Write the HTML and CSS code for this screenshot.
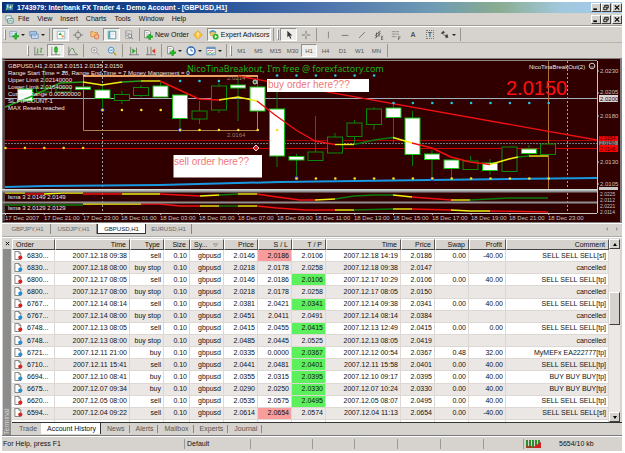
FILE: index.html
```html
<!DOCTYPE html>
<html lang="en">
<head>
<meta charset="utf-8">
<title>Interbank FX Trader 4</title>
<link rel="stylesheet" href="styles.css">
</head>
<body>
<svg class="defs" aria-hidden="true">
  <defs>
    <symbol id="i-app" viewBox="0 0 10 10"><path d="M1 1h8v7H1z" fill="#3f7fb0"/><path d="M1 8l3-4 2 2 3-4" stroke="#9ce06a" fill="none"/><path d="M3 2v3M6 3v3" stroke="#fff"/></symbol>
    <symbol id="i-docs" viewBox="0 0 10 10"><path d="M1 1h6v5H1z" fill="#fff" stroke="#6a9c9c"/><path d="M3 4h6v5H3z" fill="#e8f4f4" stroke="#5a8c8c"/><path d="M4 7l2-1 2 1" stroke="#3c9c3c" fill="none"/></symbol>
    <symbol id="i-new" viewBox="0 0 12 12"><path d="M1 2h8v6H1z" fill="#eef6ff" stroke="#7a9cc0"/><path d="M2 4h3M2 6h2" stroke="#9ab"/><path d="M7 4h2v2.500h2.500v2H9V11H7V8.500H4.500v-2H7z" fill="#22c322" stroke="#0a8a0a" stroke-width=".6"/></symbol>
    <symbol id="i-prof" viewBox="0 0 12 12"><path d="M1 2h8v5H1z" fill="#b4d0ee" stroke="#5c86b8"/><path d="M3 5h8v5H3z" fill="#dcecfc" stroke="#5c86b8"/><path d="M4 7h5" stroke="#5c86b8"/></symbol>
    <symbol id="i-watch" viewBox="0 0 12 12"><path d="M1.500 1.500h9v9h-9z" fill="#fff" stroke="#8ab4c8"/><path d="M3 6l2-3 2 3z" fill="#20a020"/><path d="M6 6.500h4l-2 3z" fill="#e89030"/></symbol>
    <symbol id="i-nav" viewBox="0 0 12 12"><circle cx="6" cy="6" r="3.300" fill="none" stroke="#777"/><path d="M6 0v4M6 8v4M0 6h4M8 6h4" stroke="#777"/></symbol>
    <symbol id="i-folder" viewBox="0 0 12 12"><path d="M1 2h3l1 1h4v5H1z" fill="#f6c47c" stroke="#d88848"/><circle cx="8" cy="8" r="2.800" fill="#f8b490" stroke="#d07040"/></symbol>
    <symbol id="i-term" viewBox="0 0 12 12"><path d="M1.500 1.500h9v9h-9z" fill="#fff" stroke="#3c8c9c"/><path d="M2 2v8h2V2z" fill="#58a0b8"/><path d="M5 3.500h4M5 5.500h4M5 7.500h3" stroke="#cdd"/></symbol>
    <symbol id="i-test" viewBox="0 0 12 12"><path d="M2 1h7v9H2z" fill="#eee" stroke="#999"/><path d="M3.500 2v6M6 3v4" stroke="#888"/><circle cx="7" cy="7" r="2.300" fill="#ddd" stroke="#777"/><path d="M9 9l2 2" stroke="#777"/></symbol>
    <symbol id="i-order" viewBox="0 0 12 12"><path d="M2 .500h5l2 2v7H2z" fill="#fff" stroke="#777"/><path d="M3.500 3h3M3.500 5h3" stroke="#aaa"/><path d="M7 5h2v2h2.500v2H9v2.500H7V9H4.500V7H7z" fill="#22c322" stroke="#0a8a0a" stroke-width=".6"/></symbol>
    <symbol id="i-diamond" viewBox="0 0 12 12"><path d="M6 .800L11.200 6 6 11.200.800 6z" fill="#ffc433" stroke="#e09a20"/><path d="M6 3v4M6 8v1.200" stroke="#fff" stroke-width="1.400"/></symbol>
    <symbol id="i-expert" viewBox="0 0 12 12"><circle cx="4.500" cy="4" r="3.200" fill="#e8c860" stroke="#a88830" stroke-width=".6"/><path d="M0 4q4.500-3 9 0L8 1.500Q4.500-1 1 1.500z" fill="#4aa0c0"/><circle cx="8" cy="8" r="3.500" fill="#2fb52f"/><path d="M7 6l3 2-3 2z" fill="#fff"/></symbol>
    <symbol id="i-cursor" viewBox="0 0 12 12"><path d="M4 1v8l2-2 1.500 3.500 1.300-.600L7.300 6.500H10z" fill="#333"/></symbol>
    <symbol id="i-cross" viewBox="0 0 12 12"><path d="M6 1v4M6 7v4M1 6h4M7 6h4" stroke="#666"/></symbol>
    <symbol id="i-vline" viewBox="0 0 12 12"><path d="M6.500 2v8" stroke="#777"/></symbol>
    <symbol id="i-hline" viewBox="0 0 12 12"><path d="M2 6.500h8" stroke="#666"/></symbol>
    <symbol id="i-slash" viewBox="0 0 12 12"><path d="M2.500 9.500l7-7" stroke="#666"/></symbol>
    <symbol id="i-chan" viewBox="0 0 12 12"><path d="M1 7l7-6M1 10l7-6M3 3v6M6 2v6" stroke="#555" fill="none"/><path d="M9 7.500h2M9 9.500h2M9 11.500h2M9 7v5" stroke="#555" stroke-width=".8"/></symbol>
    <symbol id="i-fibo" viewBox="0 0 12 12"><path d="M1 2h9M1 5h9M1 8h6" stroke="#666" stroke-dasharray="1 .5"/><path d="M9 12V8h2.500M9 10h2" stroke="#555" fill="none" stroke-width=".8"/></symbol>
    <symbol id="i-arrows" viewBox="0 0 12 12"><path d="M1 4l3-3 2 2-3 2zM6 6l3-1 1 4-3 1z" fill="#444"/><path d="M3 4l5 5" stroke="#666"/></symbol>
    <symbol id="i-bars" viewBox="0 0 12 12"><path d="M1 1v10M0 10.500h12" stroke="#777"/><path d="M4.500 3v6M3 8h1.500M8.500 2v6M8.500 3H10M7 7h1.500" stroke="#2e9a2e" fill="none"/></symbol>
    <symbol id="i-candle" viewBox="0 0 12 12"><path d="M1 1v10M0 10.500h11" stroke="#888"/><path d="M6 0v10" stroke="#1b8f1b"/><path d="M4.500 2h3v5h-3z" fill="#35d635" stroke="#1b8f1b"/></symbol>
    <symbol id="i-line" viewBox="0 0 12 12"><path d="M1 1v10M0 10.500h12" stroke="#777"/><path d="M1 8q4-9 6-3t4 4" stroke="#4a8a4a" fill="none"/></symbol>
    <symbol id="i-zin" viewBox="0 0 12 12"><circle cx="5" cy="5" r="3.500" fill="#eee" stroke="#999"/><path d="M7.500 7.500L11 11M3 5h4M5 3v4" stroke="#999"/></symbol>
    <symbol id="i-zout" viewBox="0 0 12 12"><circle cx="5" cy="5" r="3.500" fill="#dcf0fc" stroke="#3a80b8"/><path d="M3 5h4" stroke="#3a80b8"/><path d="M7.500 7.500L11 11" stroke="#c8a030" stroke-width="2"/></symbol>
    <symbol id="i-auto" viewBox="0 0 12 12"><path d="M2 1v10M0 10.500h12M9 2v8" stroke="#777"/><path d="M4 3l4 3-4 3z" fill="#1faf1f"/></symbol>
    <symbol id="i-shift" viewBox="0 0 12 12"><path d="M2 1v10M0 10.500h12M6 1v9" stroke="#777"/><path d="M11 3L7 6l4 3z" fill="#d84020"/></symbol>
    <symbol id="i-clock" viewBox="0 0 12 12"><circle cx="6" cy="6" r="4.800" fill="#fff" stroke="#2868b8" stroke-width="1.800"/><path d="M6 3v3h2.500" stroke="#2868b8" fill="none"/></symbol>
    <symbol id="i-tmpl" viewBox="0 0 12 12"><path d="M1 1.500h10v9H1z" fill="#fff" stroke="#5c8cb8"/><path d="M1 2.500h10" stroke="#5c8cb8" stroke-width="2"/><path d="M2 6l2-1 2 1 3-1" stroke="#c04040" fill="none"/><path d="M2 9l3-1 2 1 3-1" stroke="#3c9c3c" fill="none"/></symbol>
    <symbol id="i-doc" viewBox="0 0 10 10"><path d="M1 .500h4.500l2 2v7H1z" fill="#fff" stroke="#777"/><path d="M5.500.500v2h2" fill="none" stroke="#777"/><circle cx="7" cy="7.200" r="2.300" fill="currentColor"/></symbol>
  </defs>
</svg>

<div class="window">
  <header class="titlebar">
    <svg class="ico-s"><use href="#i-app"/></svg>
    <h1>1743979: Interbank FX Trader 4 - Demo Account - [GBPUSD,H1]</h1>
    <div class="winbtns">
      <button aria-label="Minimize"><svg viewBox="0 0 8 8"><path d="M1 6h4" stroke="#000" stroke-width="2"/></svg></button>
      <button aria-label="Restore"><svg viewBox="0 0 8 8"><path d="M2.500 3V1.500h4v3H5M1.500 3.500h3.500v3H1.500z" fill="none" stroke="#000"/></svg></button>
      <button aria-label="Close" class="close"><svg viewBox="0 0 8 8"><path d="M1.500 1.500l5 5M6.500 1.500l-5 5" stroke="#000" stroke-width="1.300"/></svg></button>
    </div>
  </header>

  <nav class="menubar">
    <svg class="ico-s"><use href="#i-docs"/></svg>
    <button>File</button><button>View</button><button>Insert</button><button>Charts</button><button>Tools</button><button>Window</button><button>Help</button>
    <div class="winbtns">
      <button aria-label="Minimize chart"><svg viewBox="0 0 8 8"><path d="M1 6h4" stroke="#000" stroke-width="2"/></svg></button>
      <button aria-label="Restore chart"><svg viewBox="0 0 8 8"><path d="M2.500 3V1.500h4v3H5M1.500 3.500h3.500v3H1.500z" fill="none" stroke="#000"/></svg></button>
      <button aria-label="Close chart" class="close"><svg viewBox="0 0 8 8"><path d="M1.500 1.500l5 5M6.500 1.500l-5 5" stroke="#000" stroke-width="1.300"/></svg></button>
    </div>
  </nav>

  <div class="toolbar main">
    <i class="grip"></i>
    <button class="drop" aria-label="New chart"><svg><use href="#i-new"/></svg></button>
    <button class="drop" aria-label="Profiles"><svg><use href="#i-prof"/></svg></button>
    <i class="sep"></i>
    <button class="on" aria-label="Market watch"><svg><use href="#i-watch"/></svg></button>
    <button aria-label="Data window"><svg><use href="#i-nav"/></svg></button>
    <button aria-label="Navigator"><svg><use href="#i-folder"/></svg></button>
    <button class="on" aria-label="Terminal"><svg><use href="#i-term"/></svg></button>
    <button aria-label="Strategy tester"><svg><use href="#i-test"/></svg></button>
    <i class="sep"></i>
    <button class="wide"><svg><use href="#i-order"/></svg>New Order</button>
    <button aria-label="MetaEditor"><svg><use href="#i-diamond"/></svg></button>
    <button class="wide on"><svg><use href="#i-expert"/></svg>Expert Advisors</button>
    <i class="sep"></i><i class="grip"></i>
    <button class="on" aria-label="Cursor"><svg><use href="#i-cursor"/></svg></button>
    <button aria-label="Crosshair"><svg><use href="#i-cross"/></svg></button>
    <i class="sep"></i>
    <button aria-label="Vertical line"><svg><use href="#i-vline"/></svg></button>
    <button aria-label="Horizontal line"><svg><use href="#i-hline"/></svg></button>
    <button aria-label="Trendline"><svg><use href="#i-slash"/></svg></button>
    <button aria-label="Channel"><svg><use href="#i-chan"/></svg></button>
    <button aria-label="Fibonacci"><svg><use href="#i-fibo"/></svg></button>
    <button class="glyph">A</button>
    <button class="glyph"><span class="boxed">T</span></button>
    <button class="drop" aria-label="Arrows"><svg><use href="#i-arrows"/></svg></button>
    <i class="sep"></i>
  </div>

  <div class="toolbar charts">
    <i class="grip"></i>
    <button aria-label="Bar chart"><svg><use href="#i-bars"/></svg></button>
    <button class="on" aria-label="Candlesticks"><svg><use href="#i-candle"/></svg></button>
    <button aria-label="Line chart"><svg><use href="#i-line"/></svg></button>
    <i class="sep"></i>
    <button aria-label="Zoom in"><svg><use href="#i-zin"/></svg></button>
    <button aria-label="Zoom out"><svg><use href="#i-zout"/></svg></button>
    <i class="sep"></i>
    <button aria-label="Auto scroll"><svg><use href="#i-auto"/></svg></button>
    <button aria-label="Chart shift"><svg><use href="#i-shift"/></svg></button>
    <i class="sep"></i>
    <button class="drop" aria-label="Indicators"><svg><use href="#i-order"/></svg></button>
    <button class="drop" aria-label="Periods"><svg><use href="#i-clock"/></svg></button>
    <button class="drop" aria-label="Templates"><svg><use href="#i-tmpl"/></svg></button>
    <i class="sep"></i><i class="grip"></i>
    <button class="tf">M1</button><button class="tf">M5</button><button class="tf">M15</button><button class="tf">M30</button><button class="tf on">H1</button><button class="tf">H4</button><button class="tf">D1</button><button class="tf">W1</button><button class="tf">MN</button>
    <i class="sep"></i>
  </div>

  <svg class="chart" id="chart" viewBox="2 58 620 165" role="img" aria-label="GBPUSD H1 chart">
    <rect x="2" y="58" width="620" height="165" fill="#808080"/>
    <rect x="3" y="59" width="617" height="163" fill="#300000"/>
    <path d="M2 60.500H597M4 59V221" stroke="#8a8a8a"/>
    <path d="M5 98.500H597" stroke="#a4b0c0"/>
    <path d="M5 140.500H597" stroke="#b00000"/>
    <path d="M5 143.500H597" stroke="#707880" stroke-dasharray="2 1"/>
    <path d="M5 148.500H597" stroke="#d80000"/>
    <path d="M102.500 61V213M567.500 61V213" stroke="#9aa8a8" stroke-dasharray="2 2"/>
    <path d="M83.500 76V130.500H257.500V76" fill="none" stroke="#b08050"/>
    <path d="M83 76H258" stroke="#e8a060" stroke-width="2"/>
    <path d="M548.500 61V190" stroke="#b07038"/>
    <g id="candles"></g>
    <g id="lines" fill="none"></g>
    <g id="dots"></g>
    <path d="M2 190H597" stroke="#d0dcdc" stroke-width="2"/>
    <path d="M2 191.500H597M2 202.500H597" stroke="#909090" stroke-width="2"/>
    <path d="M2 213.500H597M597.500 61V213" stroke="#c8c8c8"/>
    <circle cx="255" cy="82" r="2" fill="#2a6a2a" stroke="#ddd"/>
    <path d="M256 145l3 3-3 3-3-3z" fill="#e02020" stroke="#fff" stroke-width=".8"/>
    <rect x="267" y="79" width="102" height="13" fill="#fff"/>
    <rect x="173.500" y="155" width="88.500" height="22.500" fill="#fff"/>
    <g class="note"><text x="268" y="88">buy order here???</text><text x="174" y="165">sell order here??</text></g>
    <text class="headline" x="187" y="72">NicoTinaBreakout, I'm free @ forexfactory.com</text>
    <text class="big" x="506" y="95">2.0150</text>
    <g class="range"><text x="227" y="80">2.0214</text><text x="227" y="137">2.0164</text></g>
    <g class="info">
      <text x="8" y="68">GBPUSD,H1  2.0138 2.0151 2.0135 2.0150</text>
      <text x="8" y="75">Range Start Time = 28,  Range End Time = 7  Money Mangement = 0</text>
      <text x="8" y="82">Upper Limit 2.02140000</text>
      <text x="8" y="89">Lower Limit 2.01640000</text>
      <text x="8" y="96">Current Range 0.00500000</text>
      <text x="8" y="103">SL PIPCOUNT-1</text>
      <text x="8" y="110">MAX Resets reached</text>
      <text x="529" y="69">NicoTinaBreakOut(2)</text>
      <text x="8" y="199">lsma 3 2.0149 2.0149</text>
      <text x="8" y="210">lsma 3 2.0129 2.0129</text>
    </g>
    <circle cx="592" cy="66" r="2.800" fill="none" stroke="#ccc"/><path d="M590.500 66.500q1.500 1.500 3 0" stroke="#ccc" fill="none" stroke-width=".7"/>
    <g class="axis" id="times"></g>
    <rect x="599" y="95" width="19" height="7" fill="#d8d8d8"/>
    <rect x="599" y="141" width="19" height="5" fill="#808080"/>
    <rect x="599" y="136" width="19" height="5" fill="#f00"/>
    <rect x="599" y="145" width="19" height="7" fill="#f00"/>
    <rect x="599" y="187" width="19" height="3" fill="#c8c8c8"/>
    <g class="axis">
      <text x="600" y="73">2.0230</text><text x="600" y="94">2.0205</text><text x="600" y="118">2.0180</text>
      <text x="600" y="164">2.0130</text><text x="600" y="186">2.0105</text>
    </g>
    <g class="axis small">
      <text x="600" y="196">2.0225</text><text x="600" y="202">2.0112</text>
      <text x="600" y="208">2.0221</text><text x="600" y="214">2.0114</text>
    </g>
    <g class="axis dark"><text x="600" y="101">2.0200</text></g>
    <g class="axis small dark"><text x="600" y="140">2.0154</text><text x="600" y="145">2.0150</text><text x="600" y="151">2.0146</text></g>
    <path d="M597 71h2M597 93h2M597 116h2M597 162h2M597 184h2" stroke="#c8c8c8"/>
  </svg>

  <div class="charttabs">
    <button>GBPJPY,H1</button><button>USDJPY,H1</button><button class="on">GBPUSD,H1</button><button>EURUSD,H1</button>
    <span class="arrows"><i class="left"></i><i class="right"></i></span>
  </div>

  <section class="terminal">
    <div class="side"><button aria-label="Close terminal"><svg viewBox="0 0 6 6"><path d="M1 1l4 4M5 1L1 5" stroke="#111" stroke-width="1.200"/></svg></button><div class="strip"><span>Terminal</span></div></div>
    <div class="pane">
      <div class="grid">
        <table>
          <colgroup><col class="w43"><col class="w75"><col class="w34"><col class="w26"><col class="w34"><col class="w34"><col class="w34"><col class="w34"><col class="w75"><col class="w34"><col class="w34"><col class="w37"><col></colgroup>
          <thead><tr><th class="l">Order</th><th>Time</th><th>Type</th><th>Size</th><th class="l">Sy... <svg class="funnel" viewBox="0 0 5 4"><path d="M0 .500h5L2.500 4z" fill="#bbb" stroke="#888" stroke-width=".5"/></svg></th><th>Price</th><th>S / L</th><th>T / P</th><th>Time</th><th>Price</th><th>Swap</th><th>Profit</th><th>Comment</th></tr></thead>
          <tbody id="rows"></tbody>
        </table>
        <div class="scroll"><button aria-label="Scroll up"><i class="up"></i></button><div class="track"><div class="thumb"></div></div><button aria-label="Scroll down"><i class="down"></i></button></div>
      </div>
      <div class="termtabs"><button>Trade</button><button class="on">Account History</button><button>News</button><button>Alerts</button><button>Mailbox</button><button>Experts</button><button>Journal</button></div>
    </div>
  </section>

  <footer class="status">
    <span class="help">For Help, press F1</span><span class="prof">Default</span><span class="c62"></span><span></span><span></span><span></span><span></span><span></span>
    <span class="net"><svg viewBox="0 0 15 8"><path d="M0 4h15" stroke="#2e8b2e" stroke-width="8" stroke-dasharray="2 1"/><path d="M6 8h9V2z" fill="#d02020"/><path d="M0 6h6v2H0z" fill="#a04020"/></svg>5654/10 kb</span>
  </footer>
</div>
<script src="script.js"></script>
</body>
</html>
```
FILE: styles.css
```css
:root { --face: #d6d3ce; --dark: #808080; --alt: #ebe7e5; }
* { box-sizing: border-box; }
body { margin: 0; padding: 2px 3px 2px 2px; height: 100vh; background: #fff; font: 7px/10px "Liberation Sans", Arial, sans-serif; color: #111; }
button { font: inherit; color: inherit; background: none; border: 0; padding: 0; margin: 0; display: flex; align-items: center; justify-content: center; }
.defs { position: absolute; width: 0; height: 0; }
.window { display: flex; flex-direction: column; height: 100%; background: var(--face); overflow: hidden; }

.titlebar { display: flex; align-items: center; height: 11px; padding-left: 3px; gap: 3px; flex: none; color: #fff;
  background: linear-gradient(90deg, #0a3078 0%, #1c4a94 30%, #4a70ac 50%, #6f9cb4 70%, #8aac90 80%, #a0c8dc 90%, #a6caf0 100%); }
.titlebar h1 { margin: 0; font-size: 7px; line-height: 11px; white-space: nowrap; }
.ico-s { width: 9px; height: 9px; flex: none; }
.winbtns { display: flex; margin-left: auto; }
.winbtns button { width: 10px; height: 9px; background: var(--face); border: 1px solid; border-color: #fff #404040 #404040 #fff; }
.winbtns .close { margin-left: 1px; }
.winbtns svg { width: 8px; height: 7px; }

.menubar { display: flex; align-items: center; height: 13px; flex: none; padding-left: 3px; border-bottom: 1px solid #a09c94; }
.menubar > button { padding: 0 4px; }

.toolbar { display: flex; align-items: center; flex: none; overflow: hidden; }
.toolbar.main { height: 17px; padding-left: 1px; border-top: 1px solid #fff; border-bottom: 1px solid #b8b4ac; }
.toolbar.charts { height: 15px; padding-left: 24px; }
.toolbar button { width: 17px; height: 13px; flex: none; }
.toolbar svg { width: 10px; height: 10px; flex: none; }
.toolbar .on { background: #efedea; border: 1px solid; border-color: #909090 #fff #fff #909090; }
.toolbar .drop { width: 20px; gap: 2px; }
.toolbar .drop::after { content: ""; border: 2px solid transparent; border-top-color: #222; border-bottom: 0; }
.toolbar .wide { width: auto; gap: 2px; padding: 0 1px; }
.toolbar .glyph { font-weight: bold; color: #555; }
.toolbar .tf { font-size: 6px; color: #555; }
.toolbar .tf.on { width: 16px; }
.boxed { border: 1px dotted #777; line-height: 7px; padding: 0 1px; }
.sep { width: 1px; height: 13px; background: #989490; margin: 0 2px; flex: none; }
.grip { width: 2px; height: 11px; margin: 0 1px; flex: none; border: 1px solid; border-color: #fff #888 #888 #fff; }

.chart { display: block; width: 100%; height: auto; flex: none; font-family: "Liberation Sans", Arial, sans-serif; }
.note { font-size: 10px; fill: #f07878; }
.headline { font-family: "Noto Sans", sans-serif; font-size: 9px; fill: #18b018; }
.big { font-size: 20px; fill: #ff1010; }
.range { font-size: 6px; fill: #a87868; }
.info { font-size: 6px; fill: #e8e8e8; white-space: pre; }
.axis { font-size: 6px; fill: #c4c0c0; }
.axis.small { font-size: 5px; }
.axis.dark { fill: #300; }

.charttabs { display: flex; align-items: stretch; height: 14px; flex: none; font-size: 6px; color: #666; border-top: 1px solid #fff; border-bottom: 1px solid #aaa; padding: 0 0 2px 3px; }
.charttabs button { width: 46px; border-right: 1px solid #888; }
.charttabs .on { width: 49px; background: #fff; color: #111; border: 1px solid #333; border-top: 0; }
.arrows { margin-left: auto; display: flex; gap: 8px; align-items: center; padding-right: 4px; }
.arrows i { border: 2px solid transparent; }
.arrows .left { border-right-color: #999; border-left: 0; }
.arrows .right { border-left-color: #999; border-right: 0; }

.terminal { display: flex; flex: 1; min-height: 0; border-top: 1px solid #fff; }
.side { width: 10px; display: flex; flex-direction: column; flex: none; }
.side button { height: 11px; }
.side svg { width: 5px; height: 5px; }
.strip { flex: 1; background: #8c8c8c; margin: 0 1px; display: flex; align-items: flex-start; writing-mode: vertical-rl; transform: rotate(180deg); color: #d8d8d8; line-height: 8px; }
.pane { flex: 1; min-width: 0; display: flex; flex-direction: column; }
.grid { flex: 1; min-height: 0; display: flex; padding: 1px 2px 0 0; border-bottom: 1px solid #333; }
table { flex: 1; width: 0; height: 100%; border-collapse: separate; border-spacing: 0; table-layout: fixed; background: #fff; }
.w75 { width: 75px; } .w43 { width: 43px; } .w37 { width: 37px; } .w34 { width: 34px; } .w26 { width: 26px; }
th { height: 11px; padding: 0 3px; font-weight: normal; text-align: right; line-height: 9px; background: var(--face); border: 1px solid; border-color: #fff #555 #444 #fff; white-space: nowrap; }
th.l { text-align: left; }
.funnel { width: 5px; height: 4px; margin-left: 4px; }
td { height: 12px; padding: 0 2px; line-height: 10px; text-align: right; white-space: nowrap; border-right: 1px solid #ddd8d4; border-bottom: 1px solid #ddd8d4; }
td:first-child { text-align: left; }
tr:nth-child(even) td { background: var(--alt); }
tr td.hit-sl { background: #f89c9c; }
tr td.hit-tp { background: #5cf05c; }
td svg { width: 9px; height: 9px; vertical-align: -2px; margin-right: 4px; }
.sell svg { color: #e02020; }
.buy svg { color: #2090d8; }
tbody tr.cut td { height: 2px; padding: 0; line-height: 0; background: #fff; border-bottom: 0; }
.scroll { width: 11px; display: flex; flex-direction: column; background: #ebe8e6; flex: none; }
.scroll button, .thumb { background: var(--face); border: 1px solid; border-color: #fff #404040 #404040 #fff; }
.scroll button { height: 10px; }
.up, .down { border: 2px solid transparent; }
.up { border-bottom: 3px solid #000; border-top: 0; }
.down { border-top: 3px solid #000; border-bottom: 0; }
.track { flex: 1; padding-top: 43px; }
.thumb { height: 33px; }

.termtabs { display: flex; height: 12px; flex: none; padding: 0 0 1px 1px; color: #555; align-items: center; }
.termtabs button { padding: 0 4px 0 6px; height: 8px; border-right: 1px solid #888; }
.termtabs button:first-child { border-right: 0; }
.termtabs .on { background: #fff; color: #111; height: 11px; border-right: 1px solid #333; }

.status { display: flex; align-items: center; height: 16px; flex: none; border-top: 1px solid #777; box-shadow: inset 0 1px #fff; }
.status span { width: 43px; height: 10px; border-right: 1px solid #999; padding-left: 2px; flex: none; }
.status .help { flex: 1; padding-left: 1px; }
.status .prof { width: 66px; }
.status .c62 { width: 62px; }
.status span:nth-child(8) { width: 40px; }
.status span:nth-child(4) { width: 42px; }
.status .net { width: 98px; border: 0; display: flex; align-items: center; gap: 18px; }
.net svg { width: 15px; height: 8px; }
```
FILE: script.js
```js
// Candles: [centre x, body top, body bottom, wick top, wick bottom, falling]
const candles = [
  [25,89,101,86,101,1],[44,88,92,68,92,0],[63.5,88,92,86,94,0],[83,87,89.5,87,89.5,1],[102.5,90,98.5,86,110,1],
  [122,94.5,100.5,91,104,0],[141,87.5,95.5,85,97,0],[160.5,86,97,80,97,1],[180,95,118.5,95,129,1],[199.5,111,119,101,124,0],
  [219,86,110,83,113,0],[238,85,88,77,121,1],[257.5,87,111,84,111,1],[277,109,156,92,167,1],[296.5,156.5,160,154,178,1],
  [315.5,152,160.5,116,160,0],[335,137,153,133,153,0],[354.5,123,136.5,120,143,0],[374,109,124.5,107,130,0],[393.5,108,117.5,102,144,1],
  [412.5,118,154.5,111,166,1],[432,154,159.5,150,177,1],[451.5,160,168.5,160,178,1],[470.5,161,169.5,156,170,0],[490,163,170.5,159,175,1],
  [509.5,147,171.5,147,172,0],[529,149,153.5,145,155,1],[548,144,154.5,144,155,0]
];
document.getElementById("candles").innerHTML = candles.map(([x, t, b, wt, wb, down]) =>
  `<path d="M${x} ${wt}V${t}M${x} ${b}V${wb}" stroke="#0a7a0a"/>` +
  `<rect x="${x - 7.5}" y="${t}" width="15" height="${b - t}" fill="${down ? "#fff" : "#300000"}" stroke="${down ? "#12c412" : "#0a8a0a"}"/>`
).join("");

const R = "#f01010", Y = "#f0f010", G = "#0a7a0a";
const lines = [
  ["#20a020", "5,107 30,97 60,83 83,82"], [Y, "83,82 102,85 122,82"], ["#20a020", "122,82 141,81"], [Y, "141,81 160,81"],
  [R, "160,81 199,99 219,100"], [Y, "219,100 238,97 257,101"], [R, "257,101 275,115 296,130 315,141 335,144.5"],
  [Y, "335,144.5 354,144.5"], [G, "354,144.5 374,140 393,137.5"], [Y, "393,137.5 412,143"],
  [R, "412,143 432,148 451,157 470,162 490,164.5"], [Y, "490,164.5 509,159 518,157"], [G, "518,157 529,156"], [Y, "529,156 548,156"],
  [R, "238,76 597,140"],
  [Y, "5,193 25,193"], [R, "25,194 44,194"], [Y, "44,194 63,193 83,193"], [R, "83,194 122,194"], [Y, "122,194 160,194"],
  [R, "160,194 180,195 200,196"], [Y, "200,196 219,195"], [G, "219,195 238,194"], [Y, "238,194 257,194"],
  [R, "257,194 277,197 300,200 315,200"], [Y, "315,200 335,199"], [G, "335,199 354,196 374,195 393,195"], [Y, "393,195 412,197"],
  [R, "412,197 451,200"], [Y, "451,200 470,200"], [G, "470,200 490,199 509,198 548,198"],
  [G, "5,205 83,205"], [Y, "83,204 141,204"], [R, "141,204 160,204 180,206 200,206"], [Y, "200,206 219,206"], [G, "219,206 238,206"],
  [Y, "238,206 257,206"], [R, "257,206 277,208 305,210 335,210"], [Y, "335,210 354,210"], [G, "354,210 393,209"],
  [Y, "393,209 412,209"], [R, "412,209 451,210"], [Y, "451,210 470,211 490,211"], [R, "490,211 548,212"]
];
document.getElementById("lines").innerHTML =
  `<polyline points="5,187 45,186 160,185 280,182 430,180 597,178" stroke="#1898e0" stroke-width="2"/>` +
  lines.map(([c, p]) => `<polyline points="${p}" stroke="${c}" stroke-width="1.4"/>`).join("");

const bar = i => 5.5 + 19.4 * i;
const dot = (i, y, c) => `<circle cx="${bar(i)}" cy="${y}" r="1.300" fill="${c}"/>`;
const range = (a, b, y, c) => Array.from({ length: b - a + 1 }, (_, k) => dot(a + k, y, c)).join("");
const rings = [[5, 110], [9, 130], [15, 178], [22, 179]];
document.getElementById("dots").innerHTML =
  rings.map(([i, y]) => `<circle cx="${bar(i)}" cy="${y}" r="2" fill="#2040e0"/>`).join("") +
  range(14, 19, 75.5, "#20c8e8") + range(9, 11, 81, "#20c8e8") + dot(3, 72, "#20c8e8") + range(20, 28, 103, "#20c8e8") +
  range(5, 8, 110, "#f8e020") + range(9, 14, 130, "#f8e020") + range(0, 4, 148, "#f8e020") + range(15, 28, 178.5, "#f8e020");

const times = ["17 Dec 2007", "17 Dec 21:00", "17 Dec 23:00", "18 Dec 01:00", "18 Dec 03:00", "18 Dec 05:00", "18 Dec 07:00", "18 Dec 09:00",
  "18 Dec 11:00", "18 Dec 13:00", "18 Dec 15:00", "18 Dec 17:00", "18 Dec 19:00", "18 Dec 21:00", "18 Dec 23:00"];
document.getElementById("times").innerHTML = times.map((t, i) =>
  `<text x="${5 + Math.round(38.8 * i)}" y="220">${t}</text><path d="M${bar(2 * i)} 213v2" stroke="#c8c8c8"/>`).join("");

// Order, open time, type, open price, S/L, T/P, close time, close price, swap, profit, comment
const S = "SELL SELL SELL", B = "BUY BUY BUY";
const trades = [
  ["6830", "18 09:38", "sell", "2.0146", "2.0186", "2.0106", "18 14:19", "2.0186", "0.00", "-40.00", S + "[sl]"],
  ["6830", "18 08:00", "buy stop", "2.0218", "2.0178", "2.0258", "18 09:38", "2.0147", "", "", "cancelled"],
  ["6800", "17 08:05", "sell", "2.0146", "2.0186", "2.0106", "17 10:29", "2.0106", "0.00", "40.00", S + "[tp]"],
  ["6800", "17 08:00", "buy stop", "2.0218", "2.0178", "2.0258", "17 08:05", "2.0150", "", "", "cancelled"],
  ["6767", "14 08:14", "sell", "2.0381", "2.0421", "2.0341", "14 09:38", "2.0341", "0.00", "40.00", S + "[tp]"],
  ["6767", "14 08:00", "buy stop", "2.0451", "2.0411", "2.0491", "14 08:14", "2.0384", "", "", "cancelled"],
  ["6748", "13 08:05", "sell", "2.0415", "2.0455", "2.0415", "13 12:49", "2.0415", "0.00", "0.00", S + "[tp]"],
  ["6748", "13 08:00", "buy stop", "2.0485", "2.0445", "2.0525", "13 08:05", "2.0419", "", "", "cancelled"],
  ["6721", "11 21:00", "buy", "2.0335", "0.0000", "2.0367", "12 00:54", "2.0367", "0.48", "32.00", "MyMEFx EA222777[tp]"],
  ["6710", "11 15:41", "sell", "2.0441", "2.0481", "2.0401", "11 15:58", "2.0401", "0.00", "40.00", S + "[tp]"],
  ["6694", "10 08:41", "buy", "2.0355", "2.0315", "2.0395", "10 09:17", "2.0395", "0.00", "40.00", B + "[tp]"],
  ["6675", "07 09:34", "buy", "2.0290", "2.0250", "2.0330", "07 10:24", "2.0330", "0.00", "40.00", B + "[tp]"],
  ["6620", "05 08:00", "sell", "2.0535", "2.0575", "2.0495", "05 08:07", "2.0495", "0.00", "40.00", S + "[tp]"],
  ["6594", "04 09:22", "sell", "2.0614", "2.0654", "2.0574", "04 11:13", "2.0654", "0.00", "-40.00", S + "[sl]"]
];
document.getElementById("rows").innerHTML = trades.map(([id, open, type, price, sl, tp, close, last, swap, profit, note]) =>
  `<tr class="${type.split(" ")[0]}"><td><svg><use href="#i-doc"/></svg>${id}...</td><td>2007.12.${open}</td><td>${type}</td><td>0.10</td><td>gbpusd</td>` +
  `<td>${price}</td><td class="${note.endsWith("[sl]") ? "hit-sl" : ""}">${sl}</td><td class="${note.endsWith("[tp]") ? "hit-tp" : ""}">${tp}</td>` +
  `<td>2007.12.${close}</td><td>${last}</td><td>${swap}</td><td>${profit}</td><td>${note}</td></tr>`
).join("") + `<tr class="cut">${"<td></td>".repeat(13)}</tr>`;
```
